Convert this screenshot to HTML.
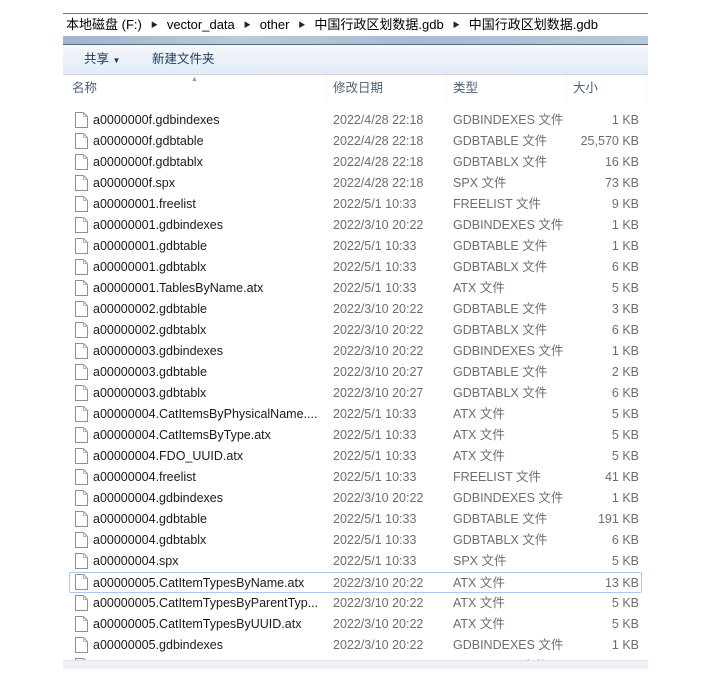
<!DOCTYPE html>
<html><head><meta charset="utf-8"><style>
body{margin:0;width:707px;height:694px;background:#fff;font-family:"Liberation Sans","Noto Sans CJK SC",sans-serif;overflow:hidden;position:relative}
.win{position:absolute;left:63px;top:13px;width:585px;height:656px;background:#fff;overflow:hidden}
.crumb{position:absolute;left:0;top:0;width:585px;height:23px;border-top:1px solid #6d7580;font-size:13px;color:#000;line-height:21px;padding-left:3px;box-sizing:border-box;white-space:nowrap}
.crumb span.a{font-size:7px;margin:0 9px;vertical-align:2px;color:#222}
.gbar{position:absolute;left:0;top:23px;width:585px;height:8px;background:linear-gradient(90deg,#9fb5cc,#b8cbdd 30%,#a6bcd3 60%,#b5c8dc);border-bottom:1px solid #5c6a78}
.tool{position:absolute;left:0;top:32px;width:585px;height:29px;background:linear-gradient(#f5f8fc,#e2ebf5);border-bottom:1px solid #c9d5e2;font-size:12.5px;color:#1e395b;line-height:29px}
.hdr{position:absolute;left:0;top:62px;width:585px;height:27px;font-size:12.5px;color:#4c607a;line-height:27px}
.hdr div{position:absolute;top:0;height:27px;border-right:1px solid #f3f4f6;box-sizing:border-box;padding-left:6px}
.row{position:absolute;left:0;height:21px;width:585px;font-size:12.5px;line-height:21px;color:#1a1a1a;white-space:nowrap}
.row .n{position:absolute;left:30px}
.row .d{position:absolute;left:270px;color:#6d6d6d}
.row .t{position:absolute;left:390px;color:#6d6d6d}
.row .s{position:absolute;right:9px;color:#6d6d6d}
.row svg{position:absolute;left:12px;top:2px}
.sel{border:1px solid #a9c9ee;border-radius:2px;box-sizing:border-box;left:6px;width:573px}
.sel .n{left:23px}.sel .d{left:263px}.sel .t{left:383px}.sel .s{right:2px}.sel svg{left:5px;top:1px}
.fade{position:absolute;left:0;top:647px;width:585px;height:9px;background:#eef1f5;border-top:1px solid #dfe4ea}
</style></head><body>
<div class="win">
<div class="crumb">本地磁盘 (F:)<span class="a">▶</span>vector_data<span class="a">▶</span>other<span class="a">▶</span>中国行政区划数据.gdb<span class="a">▶</span>中国行政区划数据.gdb</div>
<div class="gbar"></div>
<div class="tool"><span style="position:absolute;left:21px">共享 <span style="font-size:8px">▼</span></span><span style="position:absolute;left:89px">新建文件夹</span></div>
<div class="hdr">
<div style="left:0;width:264px;padding-left:9px">名称<span style="position:absolute;left:128px;top:-9px;font-size:7px;color:#8a98aa">▲</span></div>
<div style="left:264px;width:120px">修改日期</div>
<div style="left:384px;width:120px">类型</div>
<div style="left:504px;width:80px">大小</div>
</div>
<div id="rows"></div>
<div class="fade"></div>
</div>
<script>
var d=[["a0000000f.gdbindexes","2022/4/28 22:18","GDBINDEXES 文件","1 KB"],
["a0000000f.gdbtable","2022/4/28 22:18","GDBTABLE 文件","25,570 KB"],
["a0000000f.gdbtablx","2022/4/28 22:18","GDBTABLX 文件","16 KB"],
["a0000000f.spx","2022/4/28 22:18","SPX 文件","73 KB"],
["a00000001.freelist","2022/5/1 10:33","FREELIST 文件","9 KB"],
["a00000001.gdbindexes","2022/3/10 20:22","GDBINDEXES 文件","1 KB"],
["a00000001.gdbtable","2022/5/1 10:33","GDBTABLE 文件","1 KB"],
["a00000001.gdbtablx","2022/5/1 10:33","GDBTABLX 文件","6 KB"],
["a00000001.TablesByName.atx","2022/5/1 10:33","ATX 文件","5 KB"],
["a00000002.gdbtable","2022/3/10 20:22","GDBTABLE 文件","3 KB"],
["a00000002.gdbtablx","2022/3/10 20:22","GDBTABLX 文件","6 KB"],
["a00000003.gdbindexes","2022/3/10 20:22","GDBINDEXES 文件","1 KB"],
["a00000003.gdbtable","2022/3/10 20:27","GDBTABLE 文件","2 KB"],
["a00000003.gdbtablx","2022/3/10 20:27","GDBTABLX 文件","6 KB"],
["a00000004.CatItemsByPhysicalName....","2022/5/1 10:33","ATX 文件","5 KB"],
["a00000004.CatItemsByType.atx","2022/5/1 10:33","ATX 文件","5 KB"],
["a00000004.FDO_UUID.atx","2022/5/1 10:33","ATX 文件","5 KB"],
["a00000004.freelist","2022/5/1 10:33","FREELIST 文件","41 KB"],
["a00000004.gdbindexes","2022/3/10 20:22","GDBINDEXES 文件","1 KB"],
["a00000004.gdbtable","2022/5/1 10:33","GDBTABLE 文件","191 KB"],
["a00000004.gdbtablx","2022/5/1 10:33","GDBTABLX 文件","6 KB"],
["a00000004.spx","2022/5/1 10:33","SPX 文件","5 KB"],
["a00000005.CatItemTypesByName.atx","2022/3/10 20:22","ATX 文件","13 KB"],
["a00000005.CatItemTypesByParentTyp...","2022/3/10 20:22","ATX 文件","5 KB"],
["a00000005.CatItemTypesByUUID.atx","2022/3/10 20:22","ATX 文件","5 KB"],
["a00000005.gdbindexes","2022/3/10 20:22","GDBINDEXES 文件","1 KB"],
["a00000005.gdbtable","2022/3/10 20:22","GDBTABLE 文件","9 KB"]];
var ic='<svg width="13" height="16" viewBox="0 0 13 16"><path d="M0.5 0.5H8.5L12.5 4.5V15.5H0.5Z" fill="#fff" stroke="#8f8f8f"/><path d="M8.5 0.5V4.5H12.5" fill="none" stroke="#b5b5b5"/></svg>';
var h='';d.forEach(function(r,i){h+='<div class="row'+(i==22?' sel':'')+'" style="top:'+(97+i*21)+'px">'+ic+'<span class="n">'+r[0]+'</span><span class="d">'+r[1]+'</span><span class="t">'+r[2]+'</span><span class="s">'+r[3]+'</span></div>';});
document.getElementById('rows').innerHTML=h;
</script>
</body></html>
